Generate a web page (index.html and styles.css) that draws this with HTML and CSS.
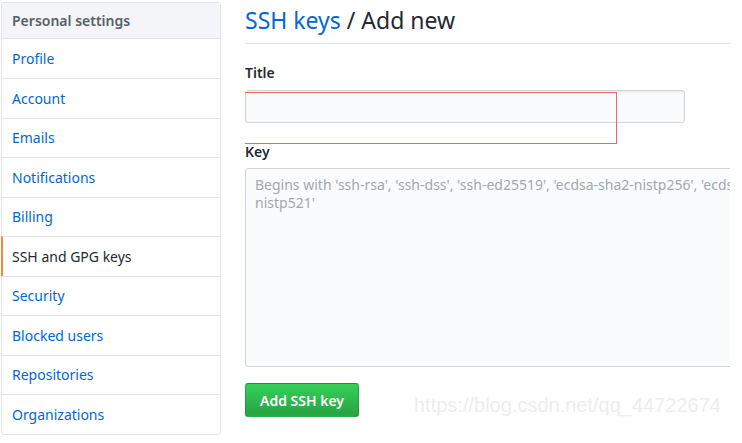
FILE: index.html
```html
<!DOCTYPE html>
<html>
<head>
<meta charset="utf-8">
<link rel="stylesheet" href="styles.css">
</head>
<body>
<div class="page">
  <nav class="menu">
    <div class="menu-heading">Personal settings</div>
    <a class="menu-item">Profile</a>
    <a class="menu-item">Account</a>
    <a class="menu-item">Emails</a>
    <a class="menu-item">Notifications</a>
    <a class="menu-item">Billing</a>
    <a class="menu-item selected">SSH and GPG keys</a>
    <a class="menu-item">Security</a>
    <a class="menu-item">Blocked users</a>
    <a class="menu-item">Repositories</a>
    <a class="menu-item">Organizations</a>
  </nav>
  <main class="content">
    <h2 class="subhead"><a class="crumb">SSH keys</a> / Add new</h2>
    <div class="form-group title-group">
      <label class="label">Title</label>
      <div class="input"></div>
      <div class="highlight"></div>
    </div>
    <div class="form-group">
      <label class="label">Key</label>
      <div class="textarea">
        <span class="ph">Begins with 'ssh-rsa', 'ssh-dss', 'ssh-ed25519', 'ecdsa-sha2-nistp256', 'ecdsa-sha2-nistp384', or 'ecdsa-sha2-</span>
        <span class="ph">nistp521'</span>
      </div>
    </div>
    <div class="actions">
      <button class="btn">Add SSH key</button>
      <span class="watermark">https://blog.csdn.net/qq_44722674</span>
    </div>
  </main>
</div>
</body>
</html>
```
FILE: styles.css
```css
* { box-sizing: border-box; }
html, body { margin: 0; padding: 0; background: #fff; }
body {
  font-family: "Noto Sans", "Open Sans", sans-serif;
  font-size: 14px;
  color: #24292e;
  width: 742px;
  height: 443px;
  overflow: hidden;
}
.page {
  display: flex;
  align-items: flex-start;
  padding: 2px 12px 0 1px;
  gap: 24px;
}
.menu {
  width: 220px;
  flex: none;
  border: 1px solid #e1e4e8;
  border-radius: 3px;
  background: #fff;
  display: flex;
  flex-direction: column;
}
.menu-heading {
  height: 36px;
  padding: 0 10px;
  display: flex;
  align-items: center;
  background: #f3f5f8;
  color: #586069;
  font-weight: 600;
  border-bottom: 1px solid #e1e4e8;
}
.menu-item {
  height: 39.5px;
  padding: 0 10px;
  display: flex;
  align-items: center;
  color: #0366d6;
  border-top: 1px solid #e1e4e8;
}
.menu-heading + .menu-item { border-top: 0; height: 39px; }
.menu-item.selected {
  color: #24292e;
  border-left: 2px solid #f0883e;
  margin-left: -1px;
  padding-left: 9px;
}
.content {
  flex: 1;
  min-width: 0;
  overflow: hidden;
  position: relative;
}
.subhead {
  margin: 3px 0 0;
  font-size: 23px;
  font-weight: 400;
  line-height: 30px;
  padding-bottom: 8px;
  border-bottom: 1px solid #e1e4e8;
  color: #24292e;
}
.crumb { color: #0366d6; }
.form-group { margin-top: 19px; position: relative; }
.label {
  display: block;
  font-weight: 600;
  line-height: 20px;
  margin-bottom: 7px;
}
.input {
  width: 440px;
  height: 33px;
  background: #fafbfc;
  border: 1px solid #d1d5da;
  border-radius: 3px;
  box-shadow: inset 0 1px 2px rgba(27,31,35,0.075);
}
.highlight {
  position: absolute;
  left: -8px;
  top: 29px;
  width: 380px;
  height: 52px;
  border: 1px solid #f06464;
}
.form-group + .form-group .label { margin-bottom: 6px; }
.textarea {
  width: 900px;
  height: 199px;
  background: #fafbfc;
  border: 1px solid #d1d5da;
  border-radius: 3px;
  padding: 7px 9px;
  color: #a3a8ae;
  font-size: 14px;
  line-height: 18px;
}
.ph { display: block; white-space: nowrap; }
.actions {
  margin-top: 16px;
  position: relative;
  height: 40px;
}
.btn {
  font-family: inherit;
  width: 114px;
  height: 34px;
  font-size: 14px;
  font-weight: 600;
  color: #fff;
  background: linear-gradient(#34d058, #28a745 90%);
  border: 1px solid rgba(27,31,35,0.2);
  border-radius: 3px;
  padding: 0;
}
.watermark {
  position: absolute;
  left: 169px;
  top: 11px;
  font-family: "Liberation Sans", Arial, sans-serif;
  font-size: 20px;
  color: #ededed;
  white-space: nowrap;
}
```
